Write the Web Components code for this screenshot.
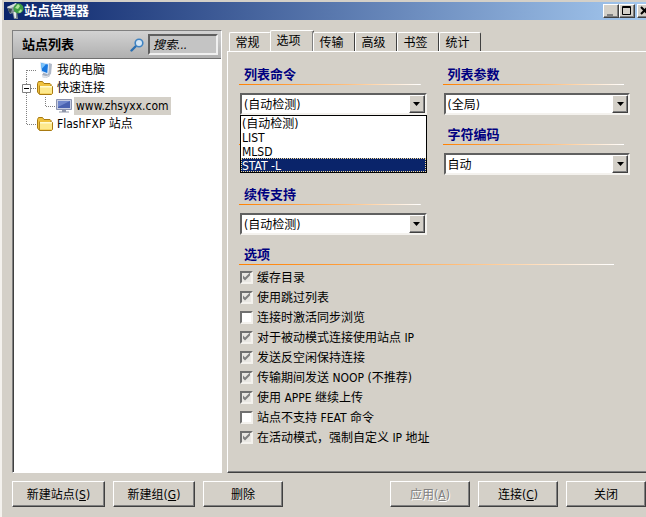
<!DOCTYPE html>
<html lang="zh-CN">
<head>
<meta charset="utf-8">
<title>站点管理器</title>
<style>
  body {
    margin: 0;
    min-height: 100vh;
    display: flex;
    overflow: hidden;
    background: #d4d0c8;
    color: #000;
    font: 12px/14px "DejaVu Sans Condensed", "Noto Sans CJK SC", sans-serif;
    --face: #d4d0c8;
    --dark: #404040;
    --shadow: #808080;
    --navy: #0a246a;
  }
</style>
</head>
<body>

<site-manager>
  <title-bar slot="title">站点管理器</title-bar>

  <site-pane slot="side" heading="站点列表">
    <tree-item icon="computer" line="first">我的电脑</tree-item>
    <tree-item icon="folder" line="open">快速连接</tree-item>
    <tree-item icon="screen" line="child" selected>www.zhsyxx.com</tree-item>
    <tree-item icon="folder" line="last">FlashFXP 站点</tree-item>
  </site-pane>

  <tab-panel slot="main" tabs="常规,选项,传输,高级,书签,统计" active="1">
    <option-group heading="列表命令">
      <combo-box label="列表命令" options="(自动检测),LIST,MLSD,STAT -L" open="3"></combo-box>
    </option-group>
    <option-group heading="列表参数">
      <combo-box label="列表参数" options="(全局)"></combo-box>
    </option-group>
    <option-group></option-group>
    <option-group heading="字符编码">
      <combo-box label="字符编码" options="自动"></combo-box>
    </option-group>
    <option-group heading="续传支持">
      <combo-box label="续传支持" options="(自动检测)"></combo-box>
    </option-group>
    <option-group heading="选项" wide>
      <check-item checked>缓存目录</check-item>
      <check-item checked>使用跳过列表</check-item>
      <check-item>连接时激活同步浏览</check-item>
      <check-item checked>对于被动模式连接使用站点 IP</check-item>
      <check-item checked>发送反空闲保持连接</check-item>
      <check-item checked>传输期间发送 NOOP (不推荐)</check-item>
      <check-item checked>使用 APPE 继续上传</check-item>
      <check-item>站点不支持 FEAT 命令</check-item>
      <check-item checked>在活动模式，强制自定义 IP 地址</check-item>
    </option-group>
  </tab-panel>

  <push-button slot="left" style="--width: 93px">新建站点(<u>S</u>)</push-button>
  <push-button slot="left" style="--width: 82px">新建组(<u>G</u>)</push-button>
  <push-button slot="left">删除</push-button>
  <push-button slot="right" disabled>应用(<u>A</u>)</push-button>
  <push-button slot="right">连接(<u>C</u>)</push-button>
  <push-button slot="right">关闭</push-button>
</site-manager>

<script>
const ICONS = {
  app: `<svg width="18" height="18" viewBox="0 0 18 18">
    <path d="M1 5l9-4 3 5-3 4-6 2z" fill="#8d9aa2"/><path d="M1 5l9-4 1 2-8 4z" fill="#d5dcdf"/>
    <path d="M6 9h5l1 8H8z" fill="#7f8b92"/><path d="M7.500 10H10v6H8.500z" fill="#e3e8ea"/>
    <path d="M2 6l4 1-1 4-2-1z" fill="#3c4a55"/>
    <circle cx="12.500" cy="6.500" r="5" fill="#3f9d45"/><path d="M9 6l3-4 2 2-2 3zM12 10l3-3 1 2-2 2z" fill="#b0e59a"/>
  </svg>`,
  search: `<svg width="14" height="14" viewBox="0 0 14 14">
    <path d="M1.500 12.500l5-5" stroke="#2c6fb0" stroke-width="2.400" stroke-linecap="round"/>
    <circle cx="9" cy="5" r="3.800" fill="#d4e6f5" stroke="#3f83c2" stroke-width="1.600"/>
  </svg>`,
  computer: `<svg width="16" height="16" viewBox="0 0 16 16">
    <path d="M12 1l3 1-1 10-3 2z" fill="#b0b9c8"/>
    <path d="M5 13l2-3 4 1 2 3-4 2-4-1z" fill="#a4adbc"/><path d="M5 13l4 1 4-1-4 3-4-1z" fill="#dfe3ea"/>
    <path d="M3 0l9 1.500-1 11L4 10z" fill="#d6e6f8"/><path d="M4 1.300l7 1.200-.8 8.500L5 9z" fill="#1878e0"/>
    <path d="M4 1.300l5 .9L4.600 7z" fill="#7cc4fa"/>
  </svg>`,
  folder: `<svg width="16" height="16" viewBox="0 0 16 16">
    <path d="M.5 12V3.500l1-2h4l1.500 2h6l1 1V6l1.500.5v7l-1 1H2.500z" fill="#efc23f" stroke="#a87a12"/>
    <path d="M3 6h12v7.500H3z" fill="#fde98d"/><path d="M3 6h12v1.500H3z" fill="#fffbd0"/>
    <path d="M2.500 14V5.500" stroke="#b98a1c"/>
  </svg>`,
  screen: `<svg width="16" height="16" viewBox="0 0 16 16">
    <path d="M.5 1.500h15v10H.5z" fill="#c8cee2" stroke="#8b93ae"/><path d="M2 3h12v7H2z" fill="#4a62b0"/>
    <path d="M2 3h12L2 9z" fill="#7188cc"/><path d="M6 12h4v1.500h3v1H3v-1h3z" fill="#8f96a8"/>
  </svg>`
};

// Branch lines left of each tree node
const LINES = {
  first: '<svg width="23" height="18"><path d="M12.500 9v9M13 9.500h10"/></svg>',
  open: `<svg width="23" height="18"><path d="M12.500 0v18M13 9.500h10"/>
    <path class="box" d="M8.500 5.500h8v8h-8z"/><path class="minus" d="M10 9.500h5"/></svg>`,
  child: '<svg width="42" height="18"><path d="M12.500 0v18M31.500 0v9M32 9.500h10"/></svg>',
  last: '<svg width="23" height="18"><path d="M12.500 0v9M13 9.500h10"/></svg>'
};

class SiteManager extends HTMLElement {
  constructor() {
    super();
    this.attachShadow({ mode: 'open' }).innerHTML = `
      <style>
        /* the window runs a little past the right edge of the viewport */
        :host {
          flex: 1;
          display: flex;
          flex-direction: column;
          margin-right: -12px;
          padding: 2px 4px 0 2px;
          border-left: 2px solid #f4f2ee;
        }
        main {
          flex: 1;
          display: grid;
          grid-template-columns: 210px 1fr;
          gap: 5px;
          padding: 10px 2px 0 8px;
        }
        footer {
          display: flex;
          justify-content: space-between;
          padding: 8px 8px 10px 8px;
        }
        footer div {
          display: flex;
          gap: 8px;
        }
      </style>
      <slot name="title"></slot>
      <main><slot name="side"></slot><slot name="main"></slot></main>
      <footer>
        <div><slot name="left"></slot></div>
        <div><slot name="right"></slot></div>
      </footer>
    `;
  }
}

class TitleBar extends HTMLElement {
  constructor() {
    super();
    this.attachShadow({ mode: 'open' }).innerHTML = `
      <style>
        :host {
          display: flex;
          align-items: center;
          height: 18px;
          padding: 0 1px 0 2px;
          color: #fff;
          background: linear-gradient(to right, #0a246a, #a6caf0);
        }
        h1 {
          flex: 1;
          margin: 0;
          font-size: 13px;
          line-height: 18px;
        }
        button {
          width: 16px;
          height: 14px;
          padding: 0;
          border: 1px solid;
          border-color: #fff #404040 #404040 #fff;
          background: var(--face);
          box-shadow: inset -1px -1px #808080;
        }
        button:last-child { margin-left: 2px; }
        button svg { display: block; }
      </style>
      ${ICONS.app}
      <h1><slot></slot></h1>
      <button aria-label="最小化"><svg width="14" height="12"><path d="M3 9h6v2H3z" fill="#808080"/></svg></button>
      <button aria-label="最大化"><svg width="14" height="12"><path d="M2.500 1.500h8v8h-8zM2 2.500h9" fill="none" stroke="#000"/></svg></button>
      <button aria-label="关闭"><svg width="14" height="12"><path d="M3 2l7 7M10 2l-7 7" stroke="#000" stroke-width="2"/></svg></button>
    `;
  }
}

class SitePane extends HTMLElement {
  constructor() {
    super();
    this.attachShadow({ mode: 'open' });
  }

  connectedCallback() {
    this.shadowRoot.innerHTML = `
      <style>
        :host {
          display: flex;
          flex-direction: column;
          border: 1px solid;
          border-color: #808080 #fff #fff #808080;
          background: #fff;
        }
        header {
          display: flex;
          align-items: center;
          height: 27px;
          padding: 0 3px 0 9px;
          border-bottom: 1px solid #707070;
          background: linear-gradient(#d2d2d2, #b0b0b0);
        }
        h2 {
          flex: 1;
          margin: 0;
          font-size: 13px;
          line-height: 18px;
        }
        input {
          box-sizing: border-box;
          width: 70px;
          height: 21px;
          margin-left: 4px;
          padding: 0 3px;
          border: 2px solid;
          border-color: #606060 #f0f0f0 #f0f0f0 #606060;
          background: #c4c4c4;
          font: italic 12px/14px "DejaVu Sans Condensed", "Noto Sans CJK SC", sans-serif;
        }
        input::placeholder { color: #000; }
        div {
          flex: 1;
          padding: 2px 0 0;
          border-left: 1px solid #404040;
        }
      </style>
      <header>
        <h2>${this.getAttribute('heading')}</h2>
        ${ICONS.search}
        <input type="text" placeholder="搜索..." aria-label="搜索">
      </header>
      <div role="tree"><slot></slot></div>
    `;
  }
}

class TreeItem extends HTMLElement {
  constructor() {
    super();
    this.attachShadow({ mode: 'open' });
  }

  connectedCallback() {
    this.setAttribute('role', 'treeitem');
    this.shadowRoot.innerHTML = `
      <style>
        :host {
          display: flex;
          align-items: center;
          height: 18px;
        }
        svg { flex: none; }
        .line path {
          fill: none;
          stroke: #808080;
          stroke-dasharray: 1 1;
        }
        .line .box { fill: #fff; stroke-dasharray: none; }
        .line .minus { stroke: #000; stroke-dasharray: none; }
        .line { display: flex; }
        .text {
          margin-left: 2px;
          padding: 2px;
        }
        :host([selected]) .text { background: var(--face); }
      </style>
      <span class="line">${LINES[this.getAttribute('line')]}</span>
      ${ICONS[this.getAttribute('icon')]}
      <span class="text"><slot></slot></span>
    `;
  }
}

class TabPanel extends HTMLElement {
  constructor() {
    super();
    this.attachShadow({ mode: 'open' });
  }

  connectedCallback() {
    const active = Number(this.getAttribute('active'));
    const tabs = this.getAttribute('tabs').split(',').map((name, i) =>
      `<button role="tab" aria-selected="${i === active}">${name}</button>`
    ).join('');

    this.shadowRoot.innerHTML = `
      <style>
        :host {
          display: flex;
          flex-direction: column;
        }
        nav {
          display: flex;
          align-items: flex-end;
          height: 21px;
          padding-left: 2px;
        }
        button {
          width: 42px;
          height: 19px;
          padding: 2px 5px 0 0;
          border: 1px solid;
          border-color: #fff #404040 transparent #fff;
          border-bottom: 0;
          border-radius: 2px 2px 0 0;
          background: var(--face);
          font: inherit;
          color: inherit;
        }
        button[aria-selected="true"] {
          width: 44px;
          height: 22px;
          padding: 0 7px 2px 0;
          margin: 0 -1px -1px;
          box-shadow: inset -1px 0 #808080;
        }
        section {
          flex: 1;
          display: grid;
          grid-template-columns: 1fr 1fr;
          grid-template-rows: repeat(3, 51px) 1fr;
          gap: 9px 16px;
          padding: 12px 21px 10px 11px;
          border: 1px solid;
          border-color: #fff #404040 #404040 #fff;
          box-shadow: inset -1px -1px #808080;
        }
      </style>
      <nav role="tablist">${tabs}</nav>
      <section role="tabpanel"><slot></slot></section>
    `;
  }
}

class OptionGroup extends HTMLElement {
  constructor() {
    super();
    this.attachShadow({ mode: 'open' });
  }

  connectedCallback() {
    this.shadowRoot.innerHTML = `
      <style>
        :host {
          display: block;
          min-width: 0;
        }
        :host([wide]) { grid-column: 1 / -1; }
        h3 {
          margin: 0 6px 8px 0;
          padding: 2px 5px 1px;
          height: 18px;
          background: linear-gradient(to right, #ff8000, #ffc080 60%, #fff) bottom / 100% 1px no-repeat;
          color: #000080;
          font-size: 13px;
          line-height: 18px;
        }
        :host([wide]) h3 { margin: 0 16px 2px 0; }
      </style>
      <h3>${this.getAttribute('heading') || ''}</h3>
      <slot></slot>
    `;
  }
}

class ComboBox extends HTMLElement {
  constructor() {
    super();
    this.attachShadow({ mode: 'open' });
  }

  connectedCallback() {
    const options = this.getAttribute('options').split(',');
    const label = this.getAttribute('label');
    const hot = Number(this.getAttribute('open'));

    this.shadowRoot.innerHTML = `
      <style>
        :host {
          display: grid;
          position: relative;
          margin-left: 1px;
          height: 18px;
          border: 2px solid;
          border-color: #606060 #f4f2ee #f4f2ee #606060;
          background: #fff;
        }
        select, .arrow { grid-area: 1 / 1; }
        select {
          min-width: 0;
          padding: 2px 18px 0 2px;
          border: 0;
          appearance: none;
          background: none;
          font: inherit;
          color: inherit;
        }
        .arrow {
          justify-self: end;
          display: grid;
          place-items: center;
          width: 14px;
          border: 1px solid;
          border-color: #fff #404040 #404040 #fff;
          background: var(--face);
          box-shadow: inset -1px -1px #808080;
          pointer-events: none;
        }
        ul {
          position: absolute;
          z-index: 1;
          top: 20px;
          left: -2px;
          right: -2px;
          margin: 0;
          padding: 0;
          border: 1px solid #000;
          background: #fff;
          list-style: none;
        }
        li {
          height: 14px;
          padding: 0 1px;
          line-height: 16px;
        }
        li[aria-selected="true"] {
          background: var(--navy);
          color: #fff;
          outline: 1px dotted #f5db95;
          outline-offset: -1px;
        }
      </style>
      <select aria-label="${label}">
        ${options.map((o) => `<option>${o}</option>`).join('')}
      </select>
      <span class="arrow"><svg width="7" height="4"><path d="M0 0h7L3.500 4z"/></svg></span>
      ${this.hasAttribute('open') ? `<ul role="listbox" aria-label="${label}">
        ${options.map((o, i) => `<li role="option" aria-selected="${i === hot}">${o}</li>`).join('')}
      </ul>` : ''}
    `;
  }
}

class CheckItem extends HTMLElement {
  constructor() {
    super();
    this.attachShadow({ mode: 'open' });
  }

  connectedCallback() {
    this.shadowRoot.innerHTML = `
      <style>
        :host { display: block; }
        label {
          display: flex;
          align-items: center;
          gap: 4px;
          height: 20px;
          padding-left: 1px;
        }
        span { padding-top: 2px; }
        input {
          box-sizing: border-box;
          width: 13px;
          height: 13px;
          margin: 0;
          border: 2px solid;
          border-color: #707070 #f4f2ee #f4f2ee #707070;
          appearance: none;
          background: #fff;
        }
        input:checked { background: #e9e7e3; }
        input:checked::before {
          content: "";
          display: block;
          width: 9px;
          height: 9px;
          background: #808080;
          clip-path: polygon(1px 3px, 3px 5px, 8px 0, 8px 3px, 3px 8px, 1px 6px);
        }
      </style>
      <label>
        <input type="checkbox" ${this.hasAttribute('checked') ? 'checked' : ''}>
        <span><slot></slot></span>
      </label>
    `;
  }
}

class PushButton extends HTMLElement {
  constructor() {
    super();
    this.attachShadow({ mode: 'open' });
  }

  connectedCallback() {
    this.shadowRoot.innerHTML = `
      <style>
        :host { display: block; }
        button {
          display: block;
          width: var(--width, 80px);
          height: 26px;
          padding: 2px 0 0;
          border: 1px solid;
          border-color: #fff #404040 #404040 #fff;
          background: var(--face);
          box-shadow: inset -1px -1px #808080;
          font: inherit;
          color: inherit;
        }
        button:disabled {
          color: #808080;
          text-shadow: 1px 1px #fff;
        }
      </style>
      <button ${this.hasAttribute('disabled') ? 'disabled' : ''}><slot></slot></button>
    `;
  }
}

customElements.define('site-manager', SiteManager);
customElements.define('title-bar', TitleBar);
customElements.define('site-pane', SitePane);
customElements.define('tree-item', TreeItem);
customElements.define('tab-panel', TabPanel);
customElements.define('option-group', OptionGroup);
customElements.define('combo-box', ComboBox);
customElements.define('check-item', CheckItem);
customElements.define('push-button', PushButton);
</script>
</body>
</html>
